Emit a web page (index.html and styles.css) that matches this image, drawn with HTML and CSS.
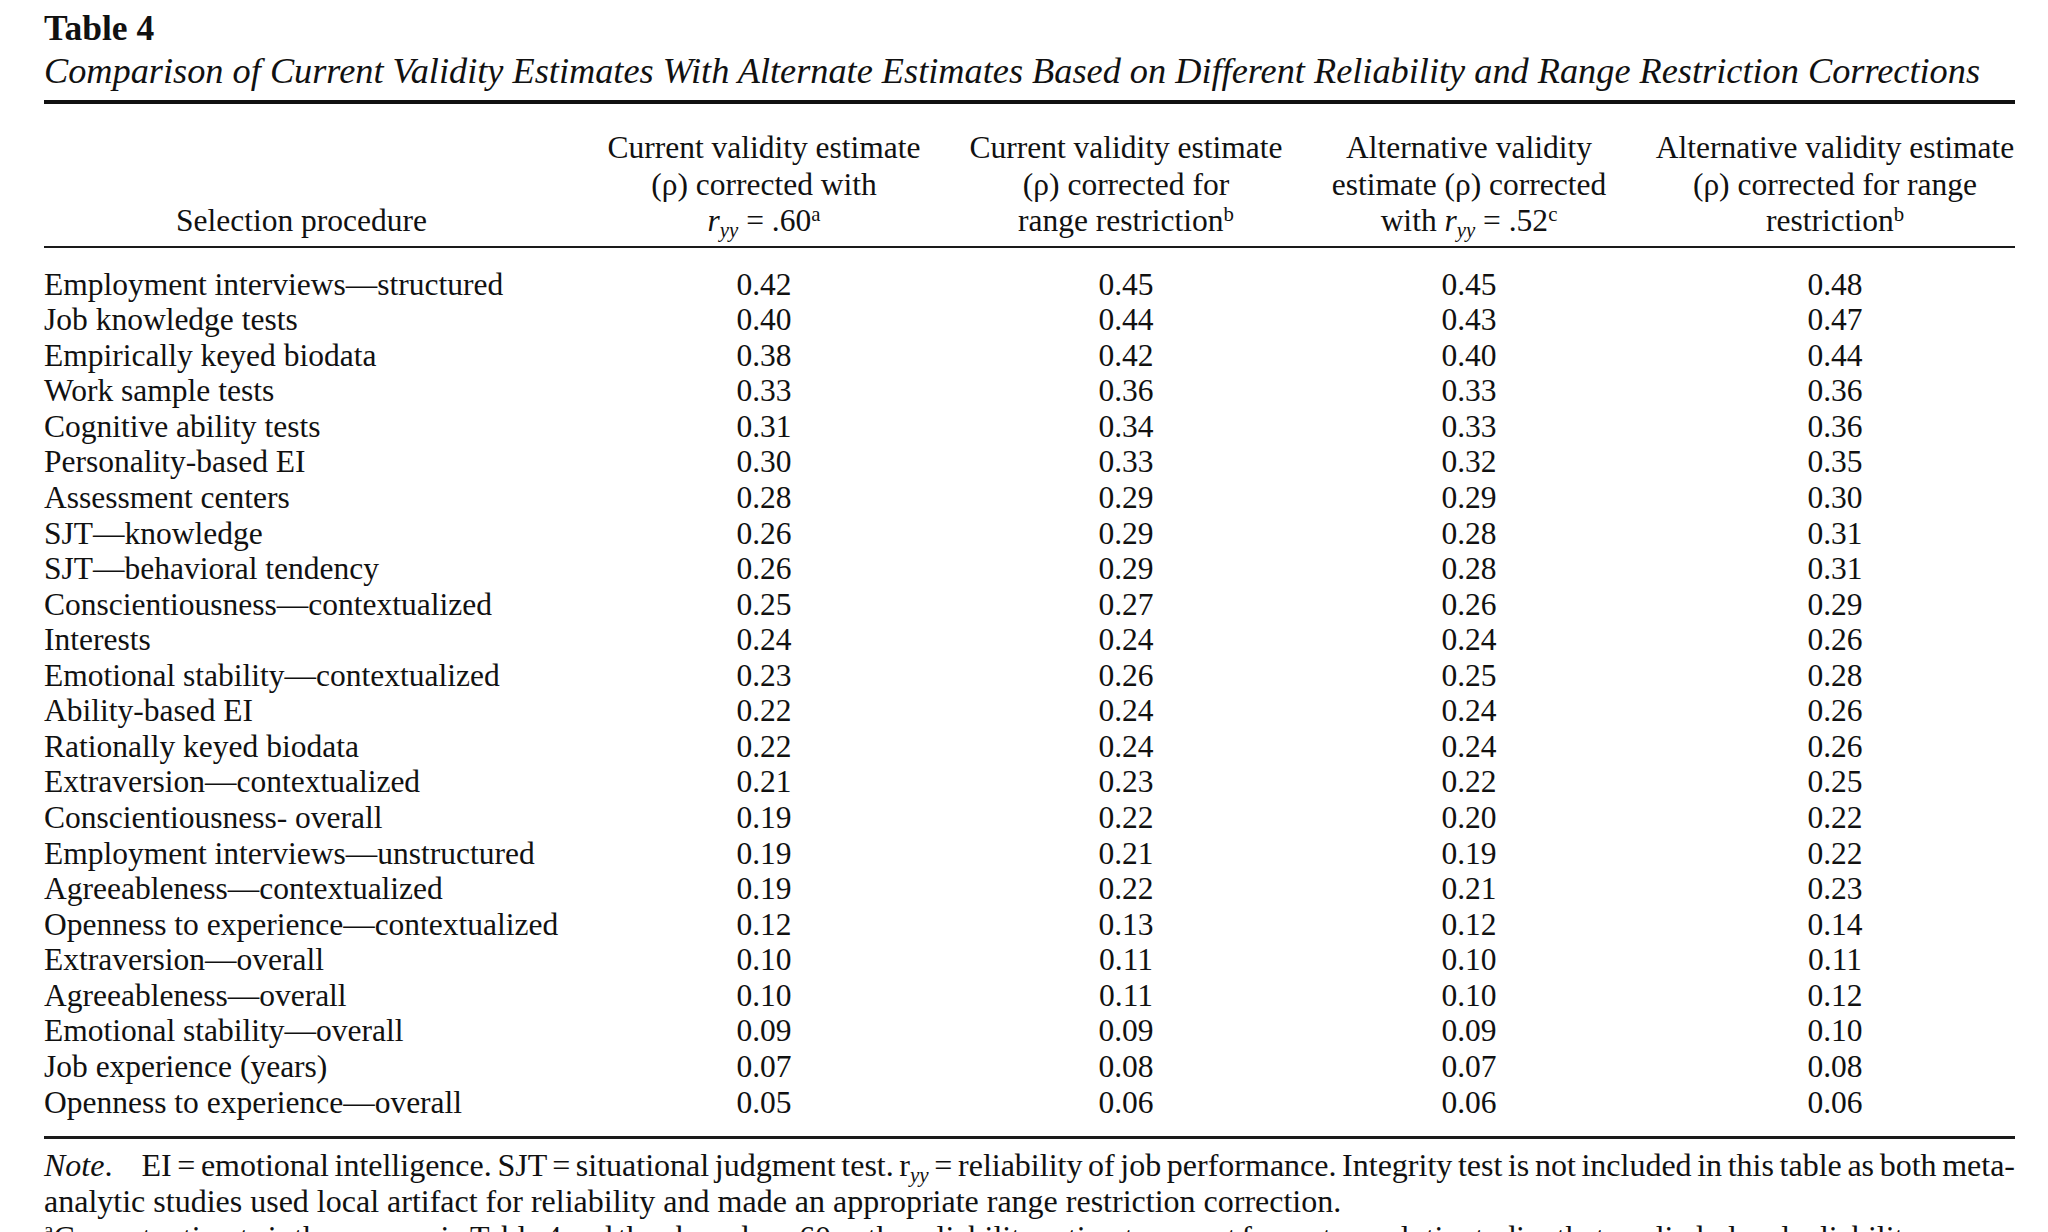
FILE: index.html
```html
<!DOCTYPE html>
<html lang="en">
<head>
<meta charset="utf-8">
<title>Table 4</title>
<link rel="stylesheet" href="styles.css">
</head>
<body>
<div class="page">
  <div class="tbl-label">Table 4</div>
  <div class="tbl-title">Comparison of Current Validity Estimates With Alternate Estimates Based on Different Reliability and Range Restriction Corrections</div>
  <table class="data">
    <colgroup>
      <col class="c0"><col class="c1"><col class="c2"><col class="c3"><col class="c4">
    </colgroup>
    <thead>
      <tr>
        <th class="proc">Selection procedure</th>
        <th>Current validity estimate<br>(ρ) corrected with<br><i>r</i><sub><i>yy</i></sub> = .60<sup>a</sup></th>
        <th>Current validity estimate<br>(ρ) corrected for<br>range restriction<sup>b</sup></th>
        <th>Alternative validity<br>estimate (ρ) corrected<br>with <i>r</i><sub><i>yy</i></sub> = .52<sup>c</sup></th>
        <th>Alternative validity estimate<br>(ρ) corrected for range<br>restriction<sup>b</sup></th>
      </tr>
    </thead>
    <tbody>
      <tr class="first"><td>Employment interviews—structured</td><td>0.42</td><td>0.45</td><td>0.45</td><td>0.48</td></tr>
      <tr><td>Job knowledge tests</td><td>0.40</td><td>0.44</td><td>0.43</td><td>0.47</td></tr>
      <tr><td>Empirically keyed biodata</td><td>0.38</td><td>0.42</td><td>0.40</td><td>0.44</td></tr>
      <tr><td>Work sample tests</td><td>0.33</td><td>0.36</td><td>0.33</td><td>0.36</td></tr>
      <tr><td>Cognitive ability tests</td><td>0.31</td><td>0.34</td><td>0.33</td><td>0.36</td></tr>
      <tr><td>Personality-based EI</td><td>0.30</td><td>0.33</td><td>0.32</td><td>0.35</td></tr>
      <tr><td>Assessment centers</td><td>0.28</td><td>0.29</td><td>0.29</td><td>0.30</td></tr>
      <tr><td>SJT—knowledge</td><td>0.26</td><td>0.29</td><td>0.28</td><td>0.31</td></tr>
      <tr><td>SJT—behavioral tendency</td><td>0.26</td><td>0.29</td><td>0.28</td><td>0.31</td></tr>
      <tr><td>Conscientiousness—contextualized</td><td>0.25</td><td>0.27</td><td>0.26</td><td>0.29</td></tr>
      <tr><td>Interests</td><td>0.24</td><td>0.24</td><td>0.24</td><td>0.26</td></tr>
      <tr><td>Emotional stability—contextualized</td><td>0.23</td><td>0.26</td><td>0.25</td><td>0.28</td></tr>
      <tr><td>Ability-based EI</td><td>0.22</td><td>0.24</td><td>0.24</td><td>0.26</td></tr>
      <tr><td>Rationally keyed biodata</td><td>0.22</td><td>0.24</td><td>0.24</td><td>0.26</td></tr>
      <tr><td>Extraversion—contextualized</td><td>0.21</td><td>0.23</td><td>0.22</td><td>0.25</td></tr>
      <tr><td>Conscientiousness- overall</td><td>0.19</td><td>0.22</td><td>0.20</td><td>0.22</td></tr>
      <tr><td>Employment interviews—unstructured</td><td>0.19</td><td>0.21</td><td>0.19</td><td>0.22</td></tr>
      <tr><td>Agreeableness—contextualized</td><td>0.19</td><td>0.22</td><td>0.21</td><td>0.23</td></tr>
      <tr><td>Openness to experience—contextualized</td><td>0.12</td><td>0.13</td><td>0.12</td><td>0.14</td></tr>
      <tr><td>Extraversion—overall</td><td>0.10</td><td>0.11</td><td>0.10</td><td>0.11</td></tr>
      <tr><td>Agreeableness—overall</td><td>0.10</td><td>0.11</td><td>0.10</td><td>0.12</td></tr>
      <tr><td>Emotional stability—overall</td><td>0.09</td><td>0.09</td><td>0.09</td><td>0.10</td></tr>
      <tr><td>Job experience (years)</td><td>0.07</td><td>0.08</td><td>0.07</td><td>0.08</td></tr>
      <tr class="last"><td>Openness to experience—overall</td><td>0.05</td><td>0.06</td><td>0.06</td><td>0.06</td></tr>
    </tbody>
  </table>
  <div class="note">
    <div class="note-line just"><i>Note</i>.<span class="gap"></span>EI = emotional intelligence. SJT = situational judgment test. r<sub><i>yy</i></sub> = reliability of job performance. Integrity test is not included in this table as both meta-</div>
    <div class="note-line">analytic studies used local artifact for reliability and made an appropriate range restriction correction.</div>
    <div class="note-line tight clip"><sup>a</sup>Current estimate is the same as in Table 4 and thus based on .60 as the reliability estimate except for meta-analytic studies that applied a local reliability</div>
  </div>
</div>
</body>
</html>
```

FILE: styles.css
```css
html, body {
  margin: 0;
  padding: 0;
  background: #ffffff;
}
body {
  overflow: hidden;
  font-family: "Liberation Serif", "Times New Roman", serif;
  color: #111111;
}
.page {
  width: 1971px;
  padding: 8px 0 0 44px;
}
.tbl-label {
  font-size: 35.5px;
  font-weight: bold;
  line-height: 40px;
}
.tbl-title {
  margin-top: 2px;
  font-size: 36.3px;
  font-style: italic;
  line-height: 42px;
  white-space: nowrap;
}
.data {
  margin-top: 8px;
  width: 1971px;
  table-layout: fixed;
  border-collapse: separate;
  border-spacing: 0;
  border-top: 4px solid #111111;
  border-bottom: 3px solid #1a1a1a;
  font-size: 31.5px;
}
.c0 { width: 515px; }
.c1 { width: 410px; }
.c2 { width: 314px; }
.c3 { width: 372px; }
.c4 { width: 360px; }
.data th {
  font-weight: normal;
  line-height: 36.5px;
  padding: 26px 0 6.5px 0;
  vertical-align: bottom;
  text-align: center;
  white-space: nowrap;
  border-bottom: 2px solid #1a1a1a;
}
.data td {
  padding: 0;
  line-height: 35.56px;
  text-align: center;
  white-space: nowrap;
}
.data td:first-child {
  text-align: left;
}
.data tr.first td {
  padding-top: 18.6px;
}
.data tr.last td {
  padding-bottom: 16px;
}
sup, sub {
  line-height: 0;
  font-size: 0.66em;
}
sup {
  vertical-align: 0.5em;
}
sub {
  vertical-align: -0.28em;
}
.note {
  margin-top: 8.4px;
  font-size: 32px;
  line-height: 36px;
}
.note-line {
  white-space: nowrap;
}
.note-line.just {
  text-align: justify;
  text-align-last: justify;
  white-space: normal;
  word-spacing: -7px;
}
.note-line.tight {
  word-spacing: -3px;
}
.note-line.clip {
  overflow: hidden;
}
.gap {
  display: inline-block;
  width: 29px;
}
```
